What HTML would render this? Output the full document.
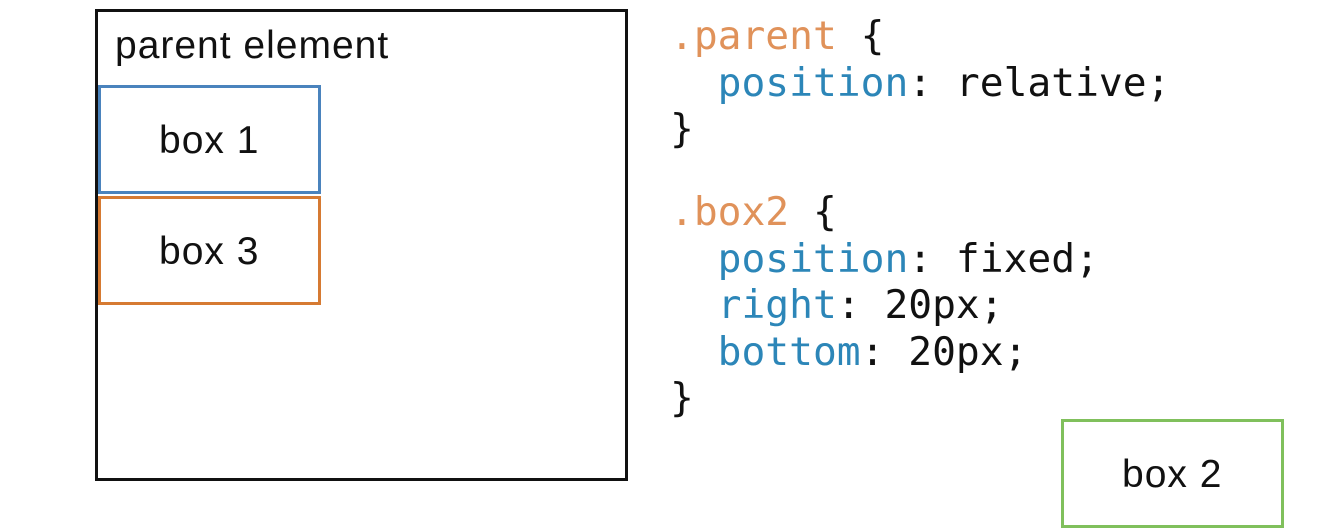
<!DOCTYPE html>
<html><head><style>
body{margin:0;width:1322px;height:532px;background:#fff;position:relative;overflow:hidden;font-family:"Liberation Sans",sans-serif;}
.b{position:absolute;box-sizing:border-box;}
.t{position:absolute;font-size:39px;letter-spacing:1px;color:#111;white-space:nowrap;}
.c{position:absolute;left:670px;font-family:"DejaVu Sans Mono","Liberation Mono",monospace;font-size:39.6px;color:#111;white-space:pre;line-height:46.6px;}
.o{color:#e0925a}.bl{color:#2c86b8}
</style></head><body>
<div class="b" style="left:95px;top:9px;width:533px;height:472px;border:3px solid #111;"></div>
<div class="t" style="left:115px;top:24px;">parent element</div>
<div class="b" style="left:98px;top:85px;width:223px;height:109px;border:3px solid #4a83bd;"></div>
<div class="t" style="left:159px;top:119px;">box 1</div>
<div class="b" style="left:98px;top:196px;width:223px;height:109px;border:3px solid #d67a32;"></div>
<div class="t" style="left:159px;top:230px;">box 3</div>
<div class="b" style="left:1061px;top:419px;width:223px;height:109px;border:3px solid #80c05c;"></div>
<div class="t" style="left:1122px;top:453px;">box 2</div>
<div class="c" style="top:13px;"><span class="o">.parent</span> {
  <span class="bl">position</span>: relative;
}</div>
<div class="c" style="top:189px;"><span class="o">.box2</span> {
  <span class="bl">position</span>: fixed;
  <span class="bl">right</span>: 20px;
  <span class="bl">bottom</span>: 20px;
}</div>
</body></html>
